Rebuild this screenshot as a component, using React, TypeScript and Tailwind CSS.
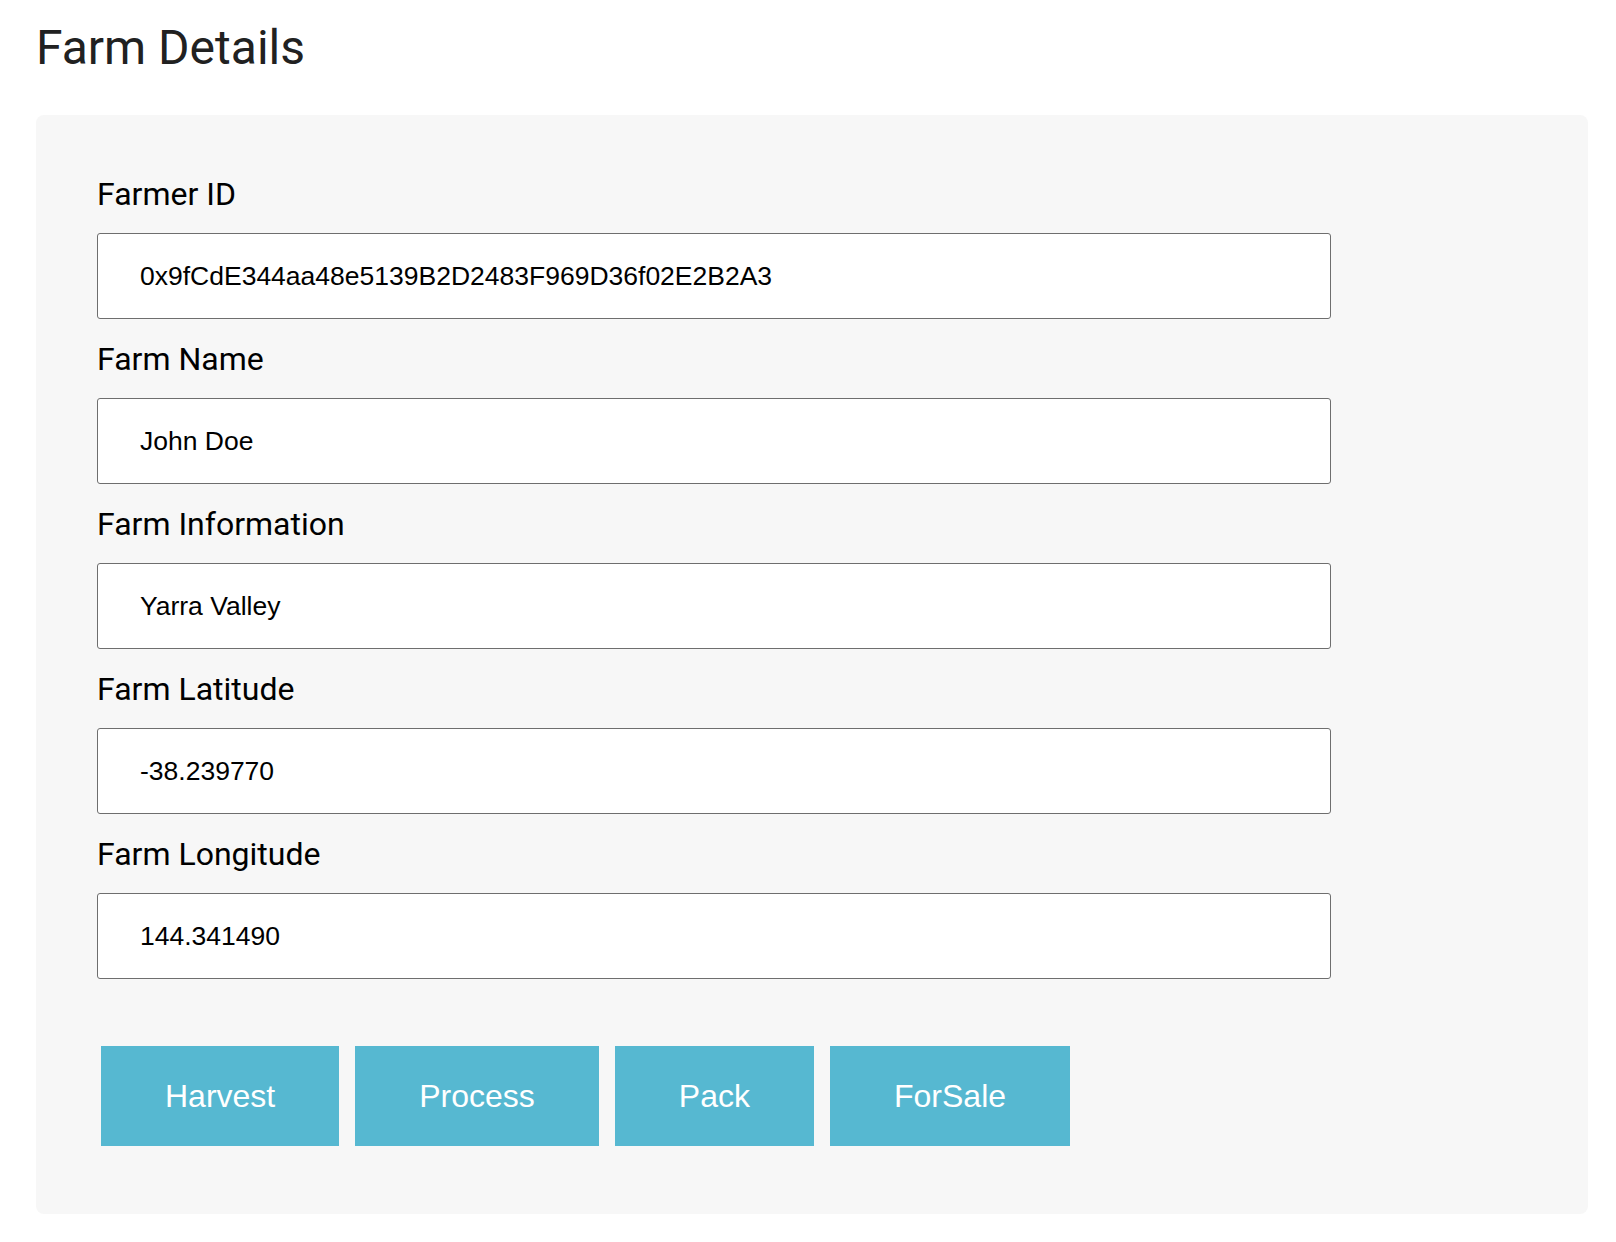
const fields = [
  { label: "Farmer ID", value: "0x9fCdE344aa48e5139B2D2483F969D36f02E2B2A3" },
  { label: "Farm Name", value: "John Doe" },
  { label: "Farm Information", value: "Yarra Valley" },
  { label: "Farm Latitude", value: "-38.239770" },
  { label: "Farm Longitude", value: "144.341490" },
];

const actions = ["Harvest", "Process", "Pack", "ForSale"];

export default function App() {
  return (
    <div className="min-h-screen bg-white pl-[36px] pr-[28px] pt-[20px]">
      <h1 className="font-['Roboto',sans-serif] text-[48px] leading-[56px] font-normal text-[#212121]">
        Farm Details
      </h1>

      <div className="mt-[39px] rounded-[8px] bg-[#f7f7f7] pl-[61px] pt-[61px] pb-[68px]">
        {fields.map((f) => (
          <div key={f.label} className="mb-[22px]">
            <label className="mb-[21px] block font-['Roboto',sans-serif] text-[32px] leading-[36px] text-black">
              {f.label}
            </label>
            <input
              readOnly
              value={f.value}
              className="block h-[86px] w-[1234px] rounded-[3px] border border-[#6e6e6e] bg-white pl-[42px] font-['Liberation_Sans',Arial,sans-serif] text-[26.5px] text-black outline-none"
            />
          </div>
        ))}

        {/* action buttons */}
        <div className="mt-[67px] flex gap-[16px] pl-[4px]">
          {actions.map((a) => (
            <button
              key={a}
              className="h-[100px] bg-[#56b8d1] px-[64px] font-['Liberation_Sans',Arial,sans-serif] text-[32px] text-white"
            >
              {a}
            </button>
          ))}
        </div>
      </div>
    </div>
  );
}
